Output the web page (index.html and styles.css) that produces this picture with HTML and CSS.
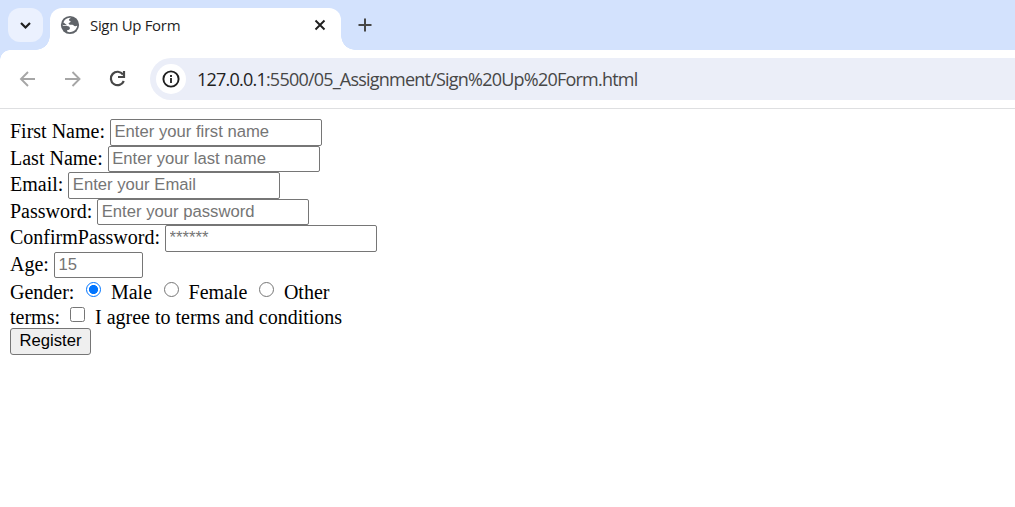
FILE: index.html
```html
<!DOCTYPE html>
<html lang="en">
<head>
<meta charset="utf-8">
<title>Sign Up Form</title>
<link rel="stylesheet" href="styles.css">
</head>
<body>
<header class="tabs">
  <button class="search" aria-label="Search tabs"><svg width="35" height="34" viewBox="0 0 35 34"><path d="M13 15l4.500 4.500L22 15" fill="none" stroke="#1f1f1f" stroke-width="2.200"/></svg></button>
  <div class="tab">
    <svg class="globe" width="20" height="20" viewBox="0 0 20 20"><circle cx="10" cy="10" r="9.100" fill="#5f6368"/><path d="M11.200 2.700C10 3.400 8.800 4 9 5.200c.1.900 1.500.3 1.600 1.300.1 1-1.300 1-1.800 1.600-.5.700.3 1.500 1.300 1.600 1.600.1 2.900-.1 3.600.8.500.7 1.600.9 3.600.3-.5 3.200-3 5.700-6.300 6.300-1.500.2-2.700 0-3.800-.5v-1.500c1.800 0 2.700-.6 2.700-1.800 0-1.500-1.400-2.200-3-2.200H2.800c-.3-4.300 2.700-8.300 7.200-8.400z" fill="#fff"/><path d="M3.200 7.200l3.900 3.100H2.400z" fill="#5f6368"/></svg>
    <span class="title">Sign Up Form</span>
    <svg class="close" width="12" height="12" viewBox="0 0 12 12"><path d="M1.500 1.500l9 9m0-9l-9 9" stroke="#1f1f1f" stroke-width="1.900"/></svg>
  </div>
  <svg class="plus" width="14" height="14" viewBox="0 0 14 14"><path d="M7 .5v13M.5 7h13" stroke="#474747" stroke-width="2"/></svg>
</header>
<nav class="toolbar">
  <svg class="back" width="18" height="18" viewBox="0 0 18 18"><path d="M16 9H2.500M9 2L2 9l7 7" fill="none" stroke="#a6a6a6" stroke-width="1.900"/></svg>
  <svg class="forward" width="18" height="18" viewBox="0 0 18 18"><path d="M1 9h14.500M8.500 2l7 7-7 7" fill="none" stroke="#a6a6a6" stroke-width="1.900"/></svg>
  <svg class="reload" width="18" height="18" viewBox="0 0 18 18"><path d="M14 4.500A6.700 6.700 0 1 0 14.800 11" fill="none" stroke="#474747" stroke-width="2.200"/><path d="M15 1v6H9" fill="none" stroke="#474747" stroke-width="2.200"/></svg>
  <div class="address">
    <span class="info"><svg width="18" height="18" viewBox="0 0 18 18"><circle cx="9" cy="9" r="7.600" fill="none" stroke="#1f1f1f" stroke-width="1.900"/><path d="M9 8v5M9 5v2" stroke="#1f1f1f" stroke-width="1.800"/></svg></span>
    <span class="url"><b>127.0.0.1</b>:5500/05_Assignment/Sign%20Up%20Form.html</span>
  </div>
</nav>
<form class="form">
  <div class="row"><label>First Name:</label><input class="field" type="text" placeholder="Enter your first name"></div>
  <div class="row"><label>Last Name:</label><input class="field" type="text" placeholder="Enter your last name"></div>
  <div class="row"><label>Email:</label><input class="field" type="email" placeholder="Enter your Email"></div>
  <div class="row"><label>Password:</label><input class="field" type="password" placeholder="Enter your password"></div>
  <div class="row"><label>ConfirmPassword:</label><input class="field" type="password" placeholder="******"></div>
  <div class="row"><label>Age:</label><input class="field age" type="text" placeholder="15"></div>
  <div class="row choices"><span>Gender:</span><i class="radio checked"></i><span>Male</span><i class="radio"></i><span>Female</span><i class="radio"></i><span>Other</span></div>
  <div class="row terms"><span>terms:</span><i class="box"></i><span>I agree to terms and conditions</span></div>
  <button class="register" type="button">Register</button>
</form>
</body>
</html>
```
FILE: styles.css
```css
* { box-sizing: border-box; }
body { margin: 0; height: 507px; overflow: hidden; background: #fff; color: #000; }
svg { display: block; flex: none; }
.tabs { height: 50px; background: #d3e2fd; display: flex; align-items: flex-start; padding-left: 8px; }
.search { margin: 8px 7px 0 0; width: 35px; height: 34px; padding: 0; border: 0; border-radius: 12px; background: #ebf1fe; }
.tab { position: relative; width: 290.500px; height: 42px; margin-top: 8px; padding: 0 15px 8px 10px; display: flex; align-items: center; background: #fff; border-radius: 12px 12px 0 0; }
.tab::before, .tab::after { content: ""; position: absolute; bottom: 0; width: 14px; height: 14px; }
.tab::before { left: -14px; background: radial-gradient(circle at 0 0, transparent 13.500px, #fff 14px); }
.tab::after { right: -14px; background: radial-gradient(circle at 100% 0, transparent 13.500px, #fff 14px); }
.title { margin-left: 10px; font: 15px/20px "Open Sans", sans-serif; letter-spacing: -.32px; color: #1f1f1f; white-space: nowrap; }
.close { margin-left: auto; }
.plus { margin: 18px 0 0 17.500px; }
.toolbar { position: relative; height: 59px; border-bottom: 1px solid #dedfe1; display: flex; align-items: center; background: #fff; padding-left: 19px; }
.toolbar::before { content: ""; position: absolute; left: 0; top: 0; width: 10px; height: 10px; background: radial-gradient(circle at 100% 100%, transparent 9.500px, #d3e2fd 10px); }
.forward { margin-left: 27px; }
.reload { margin-left: 27px; }
.address { flex: 1; height: 42px; margin-left: 23px; padding-left: 6px; display: flex; align-items: center; border-radius: 21px 0 0 21px; background: #ebeef8; }
.info { width: 30px; height: 30px; border-radius: 50%; background: #fff; display: flex; align-items: center; justify-content: center; }
.url { margin-left: 11px; font: 18px/24px "Open Sans", sans-serif; letter-spacing: -.78px; color: #474747; white-space: nowrap; }
.url b { font-weight: 400; color: #1f1f1f; }
.form { padding: 10px 0 0 10px; font: 20px/24px "Liberation Serif", serif; display: flex; flex-direction: column; align-items: flex-start; }
.row { height: 26.500px; display: flex; align-items: flex-start; white-space: nowrap; }
.row label { margin-right: 5px; }
.field { width: 212px; height: 26.500px; padding: 0 3.500px; border: 1px solid #767676; border-radius: 2px; outline: 0; background: #fff; font: 16.667px/24px "Liberation Sans", sans-serif; }
.field::placeholder { color: #757575; opacity: 1; }
.age { width: 89px; }
.choices { height: 26px; padding-top: 2px; }
.radio { width: 15px; height: 15px; border: 1px solid #767676; border-radius: 50%; margin: 2px 10px 0 11.500px; }
.checked { margin: 2px 9.500px 0 12px; border-color: #0075ff; background: radial-gradient(circle, #0075ff 4.200px, #fff 4.900px); }
.terms { height: 24px; padding-top: 1px; }
.box { width: 15px; height: 15px; margin: 2px 10px 0; border: 1px solid #767676; border-radius: 2.500px; }
.register { width: 81px; height: 27px; padding: 0 0 2px; border: 1px solid #767676; border-radius: 3px; background: #efefef; color: #000; font: 16.667px/23px "Liberation Sans", sans-serif; }
```
